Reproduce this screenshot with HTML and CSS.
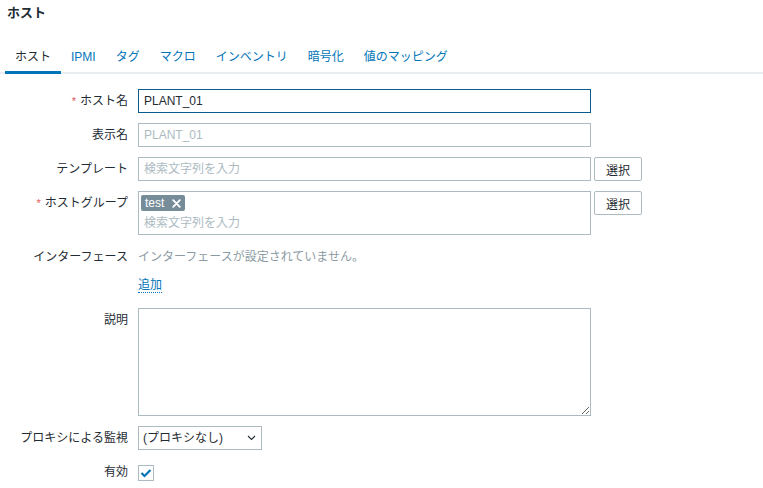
FILE: index.html
```html
<!DOCTYPE html>
<html lang="ja">
<head>
<meta charset="utf-8">
<title>ホスト</title>
<link rel="stylesheet" href="styles.css">
</head>
<body>
<header class="header">
  <h1 class="title">ホスト</h1>
</header>
<nav class="tabs">
  <a class="tab active">ホスト</a>
  <a class="tab">IPMI</a>
  <a class="tab">タグ</a>
  <a class="tab">マクロ</a>
  <a class="tab">インベントリ</a>
  <a class="tab">暗号化</a>
  <a class="tab">値のマッピング</a>
</nav>
<form class="form">
  <label class="label"><span class="req">*</span>ホスト名</label>
  <div class="field"><input class="input focus" type="text" value="PLANT_01"></div>

  <label class="label">表示名</label>
  <div class="field"><input class="input" type="text" placeholder="PLANT_01"></div>

  <label class="label">テンプレート</label>
  <div class="field row">
    <input class="input" type="text" placeholder="検索文字列を入力">
    <button type="button" class="btn">選択</button>
  </div>

  <label class="label"><span class="req">*</span>ホストグループ</label>
  <div class="field row top">
    <div class="multi">
      <span class="chip">test<span class="chip-x">
        <svg width="9" height="9" viewBox="0 0 9 9"><path d="M1.2 1.2 L7.8 7.8 M7.8 1.2 L1.2 7.8" stroke="#fff" stroke-width="1.8" stroke-linecap="round"/></svg>
      </span></span>
      <span class="ph">検索文字列を入力</span>
    </div>
    <button type="button" class="btn">選択</button>
  </div>

  <label class="label">インターフェース</label>
  <div class="field text muted">インターフェースが設定されていません。</div>

  <div class="label"></div>
  <div class="field link-row"><a class="link">追加</a></div>

  <label class="label desc">説明</label>
  <div class="field"><textarea class="textarea"></textarea></div>

  <label class="label">プロキシによる監視</label>
  <div class="field">
    <div class="select">(プロキシなし)
      <svg class="chev" width="9" height="6" viewBox="0 0 9 6"><path d="M1 1 L4.5 4.5 L8 1" fill="none" stroke="#1f2c33" stroke-width="1.1"/></svg>
    </div>
  </div>

  <label class="label">有効</label>
  <div class="field check-row">
    <span class="check"><svg width="12" height="10" viewBox="0 0 12 10"><path d="M1.5 5 L4.5 8 L10.5 2" fill="none" stroke="#0275b8" stroke-width="2.2"/></svg></span>
  </div>
</form>
</body>
</html>
```
FILE: styles.css
```css
* { box-sizing: border-box; }
body {
  margin: 0;
  background: #fff;
  font-family: "Liberation Sans", "Noto Sans CJK JP", sans-serif;
  font-size: 12px;
  color: #1f2c33;
}
.header { padding: 4px 7px 0; }
.title {
  margin: 0;
  font-size: 13px;
  line-height: 18px;
  font-weight: bold;
  color: #1f2c33;
}
.tabs {
  display: flex;
  margin-top: 27px;
  padding-left: 5px;
  border-bottom: 2px solid #ebeef0;
}
.tab {
  padding: 0 10px 6px;
  line-height: 16px;
  color: #0275b8;
  border-bottom: 3px solid transparent;
  margin-bottom: -2px;
  white-space: nowrap;
}
.tab.active { color: #1f2c33; border-bottom-color: #0275b8; }
.form {
  display: grid;
  grid-template-columns: 128px 1fr;
  column-gap: 10px;
  row-gap: 10px;
  margin-top: 15px;
}
.label {
  text-align: right;
  line-height: 24px;
  white-space: nowrap;
  color: #1f2c33;
}
.label.desc { padding-top: 5px; }
.req { color: #e45959; margin-right: 4px; font-size: 11px; }
.field { display: flex; align-items: center; }
.row { gap: 3px; }
.row.top { align-items: flex-start; }
.input {
  width: 453px;
  height: 24px;
  border: 1px solid #acbbc2;
  padding: 0 5px;
  font: inherit;
  color: #1f2c33;
  background: #fff;
  outline: none;
}
.input::placeholder { color: #acbbc2; }
.input.focus { border-color: #0c5b8f; }
.btn {
  width: 48px;
  height: 24px;
  border: 1px solid #acbbc2;
  border-radius: 2px;
  background: #fff;
  font: inherit;
  color: #1f2c33;
  padding: 0;
}
.multi {
  width: 453px;
  height: 44px;
  border: 1px solid #acbbc2;
  padding: 3px 2px 0;
  display: flex;
  flex-direction: column;
  align-items: flex-start;
}
.chip {
  display: inline-flex;
  align-items: center;
  background: #768d99;
  color: #fff;
  height: 16px;
  line-height: 16px;
  padding: 0 4px 0 4px;
  border-radius: 2px;
}
.chip-x { display: inline-flex; margin-left: 8px; }
.ph { color: #acbbc2; line-height: 18px; margin-top: 3px; padding-left: 3px; }
.text { line-height: 24px; }
.muted { color: #8b9aa3; }
.link-row { height: 16px; margin-top: -2px; }
.link {
  color: #0275b8;
  line-height: 14px;
  border-bottom: 1px dotted #0275b8;
}
.textarea {
  width: 453px;
  height: 108px;
  border: 1px solid #acbbc2;
  font: inherit;
  margin: 5px 0 0;
  display: block;
}
.select {
  position: relative;
  width: 124px;
  height: 24px;
  border: 1px solid #acbbc2;
  line-height: 22px;
  padding: 0 4px;
  color: #1f2c33;
}
.chev { position: absolute; right: 5px; top: 8px; }
.check-row { height: 24px; margin-top: 1px; }
.check {
  width: 16px;
  height: 16px;
  border: 1px solid #acbbc2;
  display: inline-flex;
  align-items: center;
  justify-content: center;
}
```
